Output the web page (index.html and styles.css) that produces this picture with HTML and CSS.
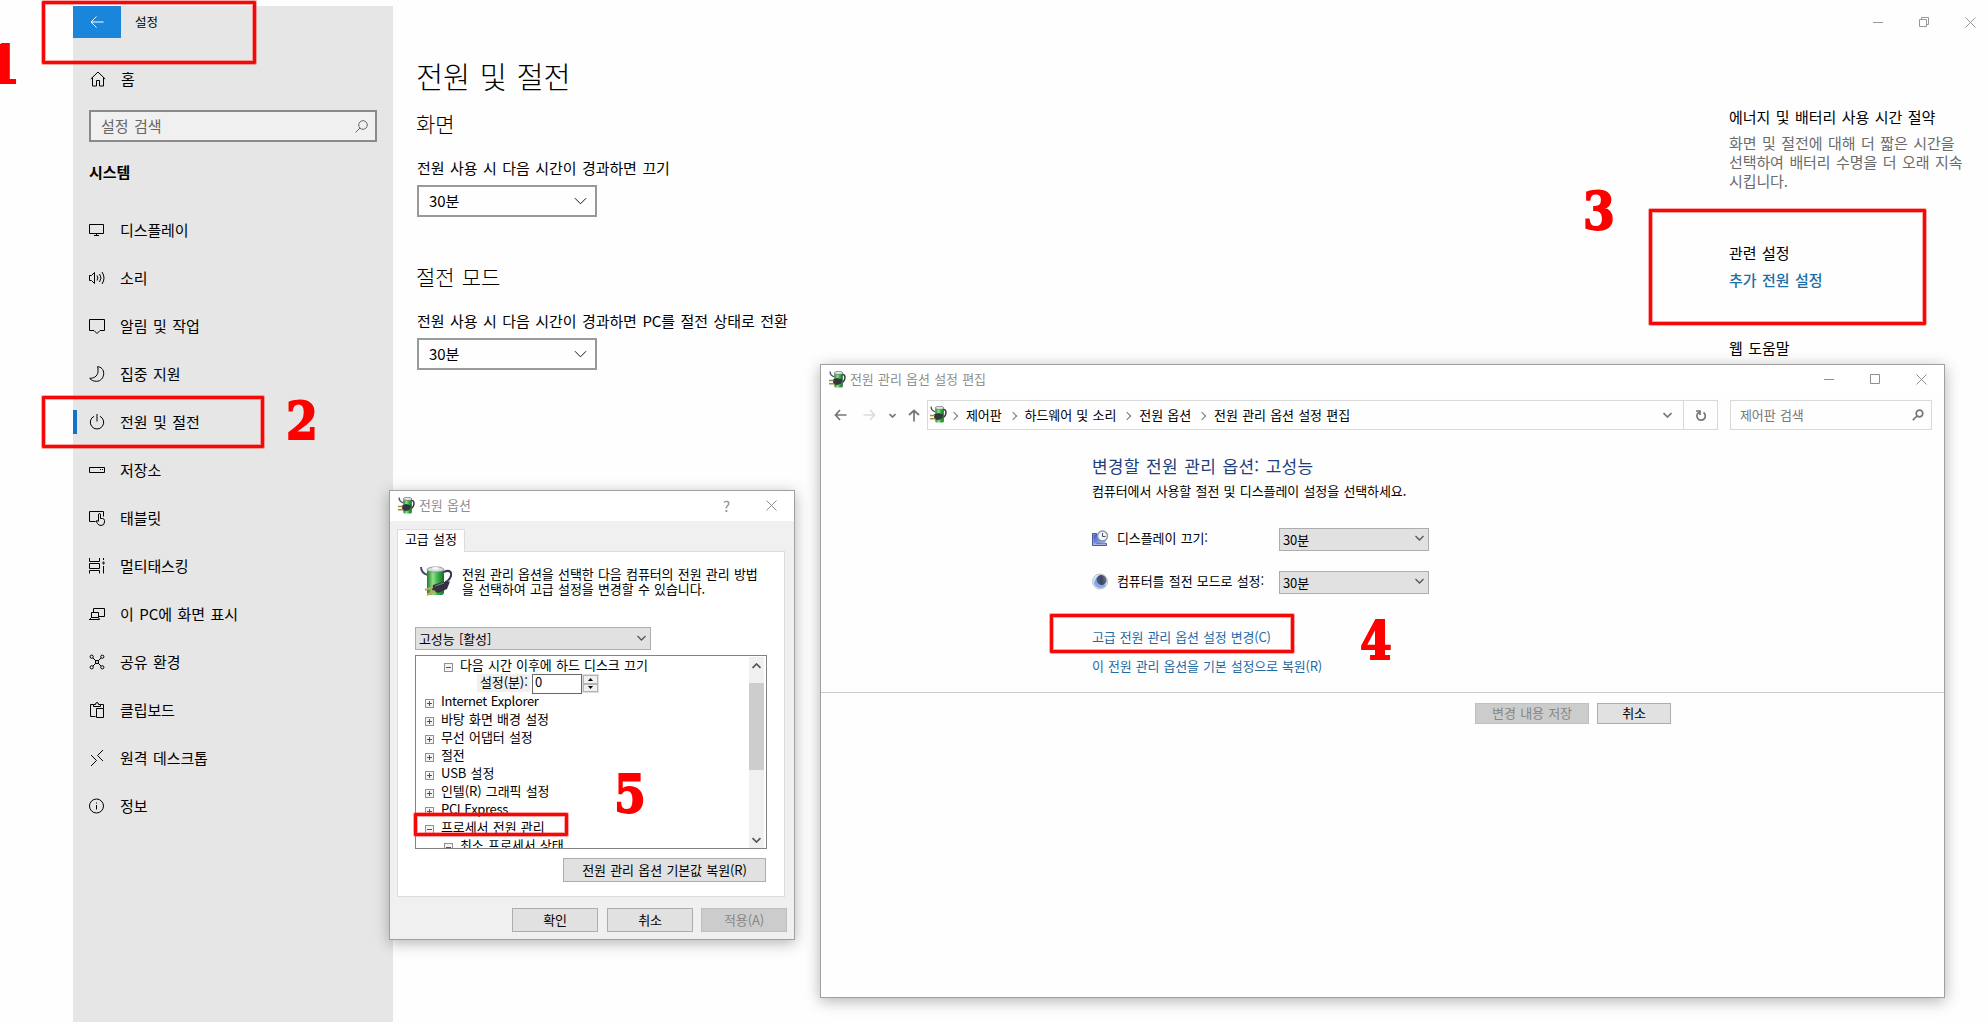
FILE: index.html
```html
<!DOCTYPE html>
<html lang="ko">

<head>
    <meta charset="UTF-8">
    <meta name="viewport" content="width=device-width, initial-scale=1.0">
    <title>전원 및 절전</title>
    <link rel="stylesheet" href="styles.css">
</head>

<body>
    <!-- shared icons -->
    <svg class="sprite" width="0" height="0">
        <defs>
            <linearGradient id="green" x1="0" x2="1" y1="0" y2="0">
                <stop offset="0" stop-color="#1d7a2c" />
                <stop offset=".35" stop-color="#8fe38c" />
                <stop offset=".6" stop-color="#3fb84a" />
                <stop offset="1" stop-color="#17692a" />
            </linearGradient>
            <linearGradient id="blue" x1="0" x2="1" y1="0" y2="1">
                <stop offset="0" stop-color="#3c55c4" />
                <stop offset="1" stop-color="#a9bbf2" />
            </linearGradient>
            <linearGradient id="moon" x1="1" x2="0" y1="0" y2="1">
                <stop offset="0" stop-color="#7c8594" />
                <stop offset=".5" stop-color="#3d4660" />
                <stop offset="1" stop-color="#4f6aa8" />
            </linearGradient>
        </defs>
        <symbol id="battery" viewBox="0 0 32 32">
            <path d="M24 6c6-3 9 1 6 6-2 3-3 4-5 4" fill="none" stroke="#3b3b50" stroke-width="2.2" />
            <path d="M1 1c0 4 3 7 7 8" fill="none" stroke="#4b4f66" stroke-width="2" />
            <rect x="7" y="3" width="17" height="26" rx="3" fill="url(#green)" />
            <ellipse cx="15.500" cy="3.500" rx="8.500" ry="2.600" fill="#d5dadd" stroke="#7d8a86" stroke-width=".8" />
            <ellipse cx="15.500" cy="2.400" rx="3.500" ry="1.300" fill="#f4f6f6" />
            <path d="M13 19l10-3 7-.5-3 7.500-9 4-6-3z" fill="#33343f" />
            <path d="M15 20l9-3" stroke="#777b8c" stroke-width="1.200" />
            <path d="M13 21l-8 3M15 25l-8 4" stroke="#c9a55a" stroke-width="2" />
        </symbol>
        <symbol id="battery-small" viewBox="0 0 16 16">
            <path d="M12 3.500c3-1 3.500 2 2.500 5-.5 1.500-1.500 2-2.500 2" fill="none" stroke="#343846" stroke-width="1.400" />
            <path d="M1 .5c0 2 1 4 4 5" fill="none" stroke="#4b4f66" stroke-width="1.200" />
            <rect x="5" y="1" width="8" height="14.500" rx="1.500" fill="url(#green)" />
            <ellipse cx="9" cy="1.800" rx="4" ry="1.500" fill="#dfe5e3" stroke="#56675c" stroke-width=".6" />
            <path d="M3.500 8l4-1.500 5 1.500-1.500 4-4 1.500-3-2z" fill="#34363b" />
            <path d="M4.500 9H0M5 12H0" stroke="#a88a3c" stroke-width="1.400" />
        </symbol>
        <symbol id="close" viewBox="0 0 11 11">
            <path d="M.5.5l10 10M10.500.5l-10 10" />
        </symbol>
        <symbol id="chevron" viewBox="0 0 14 8">
            <path d="M1 1l6 6 6-6" />
        </symbol>
        <symbol id="plus" viewBox="0 0 9 9">
            <rect x=".5" y=".5" width="8" height="8" fill="#f4f4f4" stroke="#919191" />
            <path d="M2 4.500h5M4.500 2v5" stroke="#39519b" />
        </symbol>
        <symbol id="minus" viewBox="0 0 9 9">
            <rect x=".5" y=".5" width="8" height="8" fill="#f4f4f4" stroke="#919191" />
            <path d="M2 4.500h5" stroke="#39519b" />
        </symbol>
    </svg>

    <div class="desktop">
        <!-- settings app -->
        <div class="settings">
            <aside class="sidebar">
                <div class="app-title">
                    <span class="back">
                        <svg class="line" width="14" height="12" viewBox="0 0 14 12"><path d="M6.500.5L1 6l5.500 5.500M1 6h12.500" /></svg>
                    </span>
                    <span class="label">설정</span>
                </div>
                <div class="nav-item home">
                    <svg class="line" viewBox="0 0 16 16"><path d="M.8 8L8 1l7.200 7M2.500 6.500v8.500h4V9.500h3V15h4V6.500" /></svg>
                    <span class="label">홈</span>
                </div>
                <div class="search">
                    <span class="label">설정 검색</span>
                    <svg class="line" width="13" height="13" viewBox="0 0 13 13"><circle cx="8" cy="5" r="4.300" /><path d="M5 8L.5 12.500" /></svg>
                </div>
                <h2 class="group">시스템</h2>
                <nav class="nav">
                    <div class="nav-item">
                        <svg class="line" viewBox="0 0 16 16"><path d="M.5 2.500h14v9H.5zM7.500 11.500v2M5 13.500h5" /></svg>
                        <span class="label">디스플레이</span>
                    </div>
                    <div class="nav-item">
                        <svg class="line" viewBox="0 0 16 16"><path d="M.5 5.500h2l3-3v11l-3-3h-2zM8 5.500q1.800 2.500 0 5M10.500 4q3 4 0 8M13 2q4 6 0 12" /></svg>
                        <span class="label">소리</span>
                    </div>
                    <div class="nav-item">
                        <svg class="line" viewBox="0 0 16 16"><path d="M.5 1.500h15v11h-4.500l-3 3-3-3H.5z" /></svg>
                        <span class="label">알림 및 작업</span>
                    </div>
                    <div class="nav-item">
                        <svg class="line" viewBox="0 0 16 16"><path d="M8.500.7c3.500 0 6.200 2.800 6.200 6.800 0 4.500-3.200 7.800-7.200 7.800-3 0-5.200-1-6.800-3C6 12.500 9.500 9 9 4 9 2.500 9 1.500 8.500.7z" /></svg>
                        <span class="label">집중 지원</span>
                    </div>
                    <div class="nav-item active">
                        <svg class="line" viewBox="0 0 16 16"><path d="M5 2.300a6.700 6.700 0 1 0 6 0M8 0v7.500" /></svg>
                        <span class="label">전원 및 절전</span>
                    </div>
                    <div class="nav-item">
                        <svg class="line" viewBox="0 0 16 16"><path d="M.5 5.500h15v5H.5zM11 7.500h1M13 7.500h1" /></svg>
                        <span class="label">저장소</span>
                    </div>
                    <div class="nav-item">
                        <svg class="line" viewBox="0 0 16 16"><path d="M6.500 11.500h-6v-10h14v5M9.500 11V5q0-1.500 1-1.500t1 1.500v3.500h2q2 .3 2 2v1.500q0 3.500-3.500 3.500-2.500 0-3.500-2l-1.500-2.500q.8-1 2.500.5" /></svg>
                        <span class="label">태블릿</span>
                    </div>
                    <div class="nav-item">
                        <svg class="line" viewBox="0 0 16 16"><path d="M.5 0v3.500h10V0M.5 15.500v-3h10v3M.5 5.500h10v5H.5zM14.500 0v2M14.500 8v7.500M13 5h3M14 4h1M14 6h1" /></svg>
                        <span class="label">멀티태스킹</span>
                    </div>
                    <div class="nav-item">
                        <svg class="line" viewBox="0 0 16 16"><path d="M4.500 6V2.500h11v8H10M2.500 6.500h7v5h-7zM0 13.500h10.500l-1-2M2.500 11.500L.5 13.500" /></svg>
                        <span class="label">이 PC에 화면 표시</span>
                    </div>
                    <div class="nav-item">
                        <svg class="line" viewBox="0 0 16 16"><circle cx="2.700" cy="2.700" r="1.600" /><circle cx="13.300" cy="2.700" r="1.600" /><circle cx="2.700" cy="13.300" r="1.600" /><circle cx="13.300" cy="13.300" r="1.600" /><circle cx="8" cy="8" r="1.600" /><path d="M4 4l3 3M12 4L9 7M4 12l3-3M12 12L9 9" /></svg>
                        <span class="label">공유 환경</span>
                    </div>
                    <div class="nav-item">
                        <svg class="line" viewBox="0 0 16 16"><path d="M6.500 14.500h-5v-12h3v2h7v-2h3v4M4.500 2.500h2q0-2 1.500-2t1.500 2h2M7.500 6.500h7v9h-7z" /></svg>
                        <span class="label">클립보드</span>
                    </div>
                    <div class="nav-item">
                        <svg class="line" viewBox="0 0 16 16"><path d="M2 5l5.500 5.500L2 16M14 0L8.500 5.500 14 11" /></svg>
                        <span class="label">원격 데스크톱</span>
                    </div>
                    <div class="nav-item">
                        <svg class="line" viewBox="0 0 16 16"><circle cx="7.500" cy="8" r="7" /><path d="M7.500 7v4.500M7.500 4.500v1" /></svg>
                        <span class="label">정보</span>
                    </div>
                </nav>
            </aside>

            <main class="content">
                <h1>전원 및 절전</h1>
                <section>
                    <h3>화면</h3>
                    <p>전원 사용 시 다음 시간이 경과하면 끄기</p>
                    <div class="select">30분<svg class="line" width="13" height="8"><use href="#chevron" /></svg></div>
                </section>
                <section>
                    <h3>절전 모드</h3>
                    <p>전원 사용 시 다음 시간이 경과하면 PC를 절전 상태로 전환</p>
                    <div class="select">30분<svg class="line" width="13" height="8"><use href="#chevron" /></svg></div>
                </section>
            </main>

            <aside class="related">
                <div class="window-buttons">
                    <svg class="line" width="11" height="11"><path d="M0 5.500h10" /></svg>
                    <svg class="line" width="11" height="11"><path d="M.5 2.500h7v7h-7zM2.500 2.500v-2h7v7h-2" /></svg>
                    <svg class="line" width="11" height="11"><use href="#close" /></svg>
                </div>
                <h4>에너지 및 배터리 사용 시간 절약</h4>
                <p class="hint">화면 및 절전에 대해 더 짧은 시간을<br>선택하여 배터리 수명을 더 오래 지속<br>시킵니다.</p>
                <h4 class="related-title">관련 설정</h4>
                <a class="link">추가 전원 설정</a>
                <h4 class="help-title">웹 도움말</h4>
            </aside>
        </div>

        <!-- control panel -->
        <div class="window panel-window">
            <div class="titlebar">
                <svg width="17" height="17"><use href="#battery-small" /></svg>
                <span class="title">전원 관리 옵션 설정 편집</span>
                <svg class="line" width="11" height="11"><path d="M0 5.500h10" /></svg>
                <svg class="line" width="11" height="11"><path d="M.5.500h9v9h-9z" /></svg>
                <svg class="line" width="11" height="11"><use href="#close" /></svg>
            </div>
            <div class="toolbar">
                <div class="arrows">
                    <svg class="bold" width="13" height="12" viewBox="0 0 13 12"><path d="M6 1L1.500 6 6 11M1.500 6H12.500" /></svg>
                    <svg class="bold off" width="13" height="12" viewBox="0 0 13 12"><path d="M7 1l4.500 5L7 11M11.500 6H.5" /></svg>
                    <svg class="bold" width="7" height="5" viewBox="0 0 7 5"><path d="M.5 1l3 3 3-3" /></svg>
                    <svg class="bold" width="12" height="13" viewBox="0 0 12 13"><path d="M1 6l5-4.500L11 6M6 1.500v11" /></svg>
                </div>
                <div class="address">
                    <svg width="17" height="17"><use href="#battery-small" /></svg>
                    <ol class="crumbs">
                        <li><span class="label">제어판</span></li>
                        <li><span class="label">하드웨어 및 소리</span></li>
                        <li><span class="label">전원 옵션</span></li>
                        <li><span class="label">전원 관리 옵션 설정 편집</span></li>
                    </ol>
                    <svg class="bold" width="9" height="6" viewBox="0 0 9 6"><path d="M.5 1l4 4 4-4" /></svg>
                    <span class="refresh">
                        <svg class="bold" width="12" height="13" viewBox="0 0 12 13"><path d="M8.500 3.500a4.200 4.200 0 1 1-4.500-.2M1 2h4v4" /></svg>
                    </span>
                </div>
                <div class="find">
                    <span class="label">제어판 검색</span>
                    <svg class="bold" width="12" height="12" viewBox="0 0 12 12"><circle cx="7.500" cy="4.500" r="3.300" /><path d="M5 7L.8 11.200" /></svg>
                </div>
            </div>
            <div class="panel-body">
                <h2>변경할 전원 관리 옵션: 고성능</h2>
                <p>컴퓨터에서 사용할 절전 및 디스플레이 설정을 선택하세요.</p>
                <div class="plan-row">
                    <svg width="17" height="17" viewBox="0 0 17 17">
                        <path d="M.5 3.500h4v10h10v2H.5z" fill="#a8b4e6" stroke="#4d5794" />
                        <rect x="1.500" y="4.500" width="12" height="9" fill="url(#blue)" />
                        <circle cx="10.500" cy="6" r="5" fill="#eef3f8" stroke="#8b95a3" stroke-width="1.400" />
                        <path d="M10.500 3v3.500h3" fill="none" stroke="#40506a" />
                    </svg>
                    <span>디스플레이 끄기:</span>
                    <div class="combo">30분<svg class="bold" width="9" height="6" viewBox="0 0 9 6"><path d="M.5 1l4 4 4-4" /></svg></div>
                </div>
                <div class="plan-row">
                    <svg width="17" height="17" viewBox="0 0 17 17">
                        <circle cx="8" cy="8.500" r="7.500" fill="#dbe4f1" stroke="#b9c1cc" />
                        <path d="M2 11q3 4.500 7 4t5-3.500q-8 .5-9-7-3 2.500-3 6.500z" fill="#86a8e6" />
                        <ellipse cx="9.500" cy="7" rx="5.200" ry="4.800" transform="rotate(40 9.500 7)" fill="url(#moon)" />
                    </svg>
                    <span>컴퓨터를 절전 모드로 설정:</span>
                    <div class="combo">30분<svg class="bold" width="9" height="6" viewBox="0 0 9 6"><path d="M.5 1l4 4 4-4" /></svg></div>
                </div>
                <a class="panel-link">고급 전원 관리 옵션 설정 변경(C)</a>
                <a class="panel-link">이 전원 관리 옵션을 기본 설정으로 복원(R)</a>
            </div>
            <div class="panel-footer">
                <div class="btn off">변경 내용 저장</div>
                <div class="btn">취소</div>
            </div>
        </div>

        <!-- advanced power options -->
        <div class="window dialog">
            <div class="titlebar">
                <svg width="17" height="17"><use href="#battery-small" /></svg>
                <span class="title">전원 옵션</span>
                <span class="question">?</span>
                <svg class="line" width="11" height="11"><use href="#close" /></svg>
            </div>
            <div class="tab">고급 설정</div>
            <div class="tab-page">
                <div class="intro">
                    <svg width="32" height="32"><use href="#battery" /></svg>
                    <p>전원 관리 옵션을 선택한 다음 컴퓨터의 전원 관리 방법<br>을 선택하여 고급 설정을 변경할 수 있습니다.</p>
                </div>
                <div class="combo plan">고성능 [활성]<svg class="bold" width="9" height="6" viewBox="0 0 9 6"><path d="M.5 1l4 4 4-4" /></svg></div>
                <div class="tree-box">
                    <ul class="tree">
                        <li class="sub"><svg width="9" height="9"><use href="#minus" /></svg>다음 시간 이후에 하드 디스크 끄기</li>
                        <li class="value">
                            <span class="value-label">설정(분):</span>
                            <span class="value-input">0</span>
                            <span class="spinner">
                                <i><svg width="5" height="3"><path d="M0 3l2.500-3L5 3z" /></svg></i>
                                <i><svg width="5" height="3"><path d="M0 0l2.500 3L5 0z" /></svg></i>
                            </span>
                        </li>
                        <li class="latin"><svg width="9" height="9"><use href="#plus" /></svg>Internet Explorer</li>
                        <li><svg width="9" height="9"><use href="#plus" /></svg>바탕 화면 배경 설정</li>
                        <li><svg width="9" height="9"><use href="#plus" /></svg>무선 어댑터 설정</li>
                        <li><svg width="9" height="9"><use href="#plus" /></svg>절전</li>
                        <li><svg width="9" height="9"><use href="#plus" /></svg>USB 설정</li>
                        <li><svg width="9" height="9"><use href="#plus" /></svg>인텔(R) 그래픽 설정</li>
                        <li class="latin"><svg width="9" height="9"><use href="#plus" /></svg>PCI Express</li>
                        <li><svg width="9" height="9"><use href="#minus" /></svg>프로세서 전원 관리</li>
                        <li class="sub"><svg width="9" height="9"><use href="#minus" /></svg>최소 프로세서 상태</li>
                    </ul>
                    <div class="scrollbar">
                        <svg class="bold" width="9" height="6" viewBox="0 0 9 6"><path d="M.5 5l4-4 4 4" /></svg>
                        <div class="thumb"></div>
                        <svg class="bold" width="9" height="6" viewBox="0 0 9 6"><path d="M.5 1l4 4 4-4" /></svg>
                    </div>
                </div>
                <div class="btn restore">전원 관리 옵션 기본값 복원(R)</div>
            </div>
            <div class="dialog-footer">
                <div class="btn">확인</div>
                <div class="btn">취소</div>
                <div class="btn off">적용(A)</div>
            </div>
        </div>

        <!-- step markers -->
        <div class="mark mark-1"></div>
        <div class="mark mark-2"></div>
        <div class="mark mark-3"></div>
        <div class="mark mark-4"></div>
        <div class="mark mark-5"></div>
        <span class="step step-1">1</span>
        <span class="step step-2">2</span>
        <span class="step step-3">3</span>
        <span class="step step-4">4</span>
        <span class="step step-5">5</span>
    </div>
</body>

</html>
```

FILE: styles.css
```css
* {
    box-sizing: border-box;
}

body {
    margin: 0;
    background-color: #fefefe;
    color: #000;
    font-family: "Noto Sans CJK KR", "Noto Sans", sans-serif;
    font-size: 15px;
    letter-spacing: -0.1px;
    overflow: hidden;
}

h1, h2, h3, h4, p, ol, ul {
    margin: 0;
    padding: 0;
    font-weight: 400;
    list-style: none;
}

svg {
    display: block;
    flex: none;
}

.sprite {
    position: absolute;
}

.line,
.bold {
    fill: none;
    stroke: currentColor;
    stroke-width: 1;
}

.bold {
    stroke-width: 1.7;
}

.label {
    padding-bottom: 2px;
}

.desktop {
    position: relative;
    width: 1988px;
    height: 1022px;
    overflow: hidden;
    white-space: nowrap;
}

/* -- Settings app -- */

.settings {
    display: flex;
    height: 100%;
    padding: 6px 0 0 73px;
    word-spacing: 1.5px;
}

.sidebar {
    flex: none;
    width: 320px;
    background-color: #e6e6e6;
}

.app-title {
    display: flex;
    align-items: center;
    gap: 14px;
    height: 32px;
    font-size: 12.5px;
}

.back {
    display: flex;
    align-items: center;
    justify-content: center;
    width: 48px;
    height: 32px;
    background-color: #1a86db;
    color: white;
}

.nav-item {
    display: flex;
    align-items: center;
    gap: 15px;
    height: 48px;
    padding-left: 16px;
}

.nav-item svg {
    width: 16px;
    height: 16px;
}

.home {
    height: 32px;
    margin: 25px 0 15px;
    padding-left: 17px;
}

.active {
    background: linear-gradient(#1373c8, #1373c8) 0 center / 4px 24px no-repeat;
}

.search {
    display: flex;
    align-items: center;
    justify-content: space-between;
    width: 288px;
    height: 32px;
    margin-left: 16px;
    padding: 0 7px 0 10px;
    border: 2px solid #8a8a8a;
    background-color: #f0f0f0;
    color: #666;
}

.group {
    margin: 18px 0 22px 16px;
    font-size: 15px;
    font-weight: 700;
    line-height: 24px;
}

.content {
    flex: 1;
    padding: 48px 0 0 24px;
}

.content h1 {
    margin: 0 0 13px -1px;
    font-size: 29.5px;
    font-weight: 300;
    line-height: 42px;
}

.content section {
    height: 153px;
}

.content h3 {
    margin-left: -1px;
    font-size: 21px;
    font-weight: 300;
    line-height: 28px;
}

.content section p {
    padding: 20px 0 6px;
    line-height: 22px;
}

.select {
    display: flex;
    align-items: center;
    justify-content: space-between;
    width: 180px;
    height: 32px;
    padding: 0 8px 1px 10px;
    border: 2px solid #999;
}

.related {
    flex: none;
    width: 259px;
}

.window-buttons {
    display: flex;
    justify-content: flex-end;
    gap: 35px;
    padding: 11px 12px 0 0;
    color: #999;
}

.related h4 {
    font-size: 15px;
    line-height: 22px;
}

.window-buttons + h4 {
    margin-top: 78px;
}

.hint {
    margin-top: 5px;
    color: #6b6b6b;
    line-height: 19px;
}

.related .related-title {
    margin-top: 52px;
}

.link {
    display: block;
    margin-top: 5px;
    color: #1a70a8;
    font-weight: 500;
    line-height: 22px;
}

.related .help-title {
    margin-top: 46px;
}

/* -- Classic windows -- */

.window {
    position: absolute;
    display: flex;
    flex-direction: column;
    border: 1px solid #a0a0a0;
    background-color: #fefefe;
    box-shadow: 0 3px 14px rgba(0, 0, 0, 0.3);
    font-size: 13px;
    word-spacing: 0.8px;
}

.titlebar {
    display: flex;
    flex: none;
    align-items: center;
    height: 30px;
    padding: 0 17px 2px 8px;
    background-color: white;
    color: #8f8f8f;
}

.title {
    flex: 1;
    margin-left: 4px;
    padding-bottom: 2px;
}

.btn {
    display: flex;
    align-items: center;
    justify-content: center;
    padding-bottom: 2px;
    border: 1px solid #adadad;
    background-color: #e1e1e1;
}

.btn.off {
    border-color: #bfbfbf;
    background-color: #ccc;
    color: #868686;
}

.combo {
    display: flex;
    align-items: center;
    justify-content: space-between;
    height: 23px;
    padding: 0 4px 1px 3px;
    border: 1px solid #adadad;
    background-color: #e1e1e1;
}

.combo svg {
    color: #555;
    stroke-width: 1.3;
}

/* -- Control panel -- */

.panel-window {
    left: 820px;
    top: 364px;
    width: 1125px;
    height: 634px;
}

.panel-window .titlebar {
    gap: 35px;
}

.panel-window .title {
    margin-left: -31px;
}

.toolbar {
    display: flex;
    align-items: center;
    height: 30px;
    margin: 5px 12px 0 13px;
    color: #767676;
}

.arrows {
    display: flex;
    align-items: center;
    width: 93px;
}

.arrows svg:nth-child(2) {
    margin: 0 13px 0 16px;
}

.arrows svg:nth-child(4) {
    margin-left: 12px;
}

.bold.off {
    color: #ddd;
}

.address {
    display: flex;
    align-items: center;
    width: 791px;
    height: 30px;
    padding-left: 2px;
    border: 1px solid #d9d9d9;
}

.address > svg:first-child {
    margin-bottom: 2px;
}

.crumbs {
    display: flex;
    flex: 1;
    color: #000;
}

.crumbs li {
    display: flex;
    align-items: center;
}

.crumbs li::before {
    content: "";
    width: 5px;
    height: 5px;
    margin: 1px 9px 0 4px;
    border: solid #777;
    border-width: 1.5px 1.5px 0 0;
    transform: rotate(45deg);
}

.crumbs li + li::before {
    margin-left: 8px;
}

.refresh {
    display: flex;
    align-items: center;
    justify-content: center;
    width: 34px;
    height: 28px;
    margin-left: 11px;
    border-left: 1px solid #d9d9d9;
}

.find {
    display: flex;
    align-items: center;
    justify-content: space-between;
    width: 202px;
    height: 30px;
    margin-left: 12px;
    padding: 0 7px 0 9px;
    border: 1px solid #d9d9d9;
}

.panel-body {
    height: 262px;
    padding: 24px 0 0 271px;
}

.panel-body h2 {
    color: #1d3f7d;
    font-size: 17px;
    letter-spacing: 0.2px;
    word-spacing: 1.6px;
    line-height: 24px;
}

.panel-body p {
    margin: 3px 0 27px;
    line-height: 20px;
}

.plan-row {
    display: flex;
    align-items: center;
    height: 23px;
    margin-bottom: 20px;
}

.plan-row span {
    width: 162px;
    margin-left: 8px;
    padding-bottom: 5px;
}

.plan-row svg:first-child {
    margin-bottom: 2px;
}

.plan-row .combo {
    width: 150px;
}

.panel-link {
    display: block;
    padding-top: 13px;
    color: #1f6ba5;
    letter-spacing: -0.2px;
    line-height: 20px;
}

.panel-link + .panel-link {
    padding-top: 9px;
}

.panel-footer {
    display: flex;
    gap: 8px;
    padding: 10px 0 0 654px;
    border-top: 1px solid #ccc;
}

.panel-footer .btn {
    width: 74px;
    height: 21px;
}

.panel-footer .btn.off {
    width: 114px;
}

/* -- Power options dialog -- */

.dialog {
    left: 389px;
    top: 490px;
    width: 406px;
    height: 450px;
    background-color: #f0f0f0;
}

.question {
    margin-right: 36px;
    font-size: 15px;
}

.tab {
    z-index: 1;
    width: 68px;
    height: 23px;
    margin: 8px 0 -1px 7px;
    padding-left: 7px;
    border: 1px solid #dcdcdc;
    border-bottom: 0;
    background-color: white;
    line-height: 18px;
}

.tab-page {
    width: 388px;
    height: 346px;
    margin-left: 7px;
    padding: 14px 0 0 17px;
    border: 1px solid #dcdcdc;
    background-color: white;
}

.intro {
    display: flex;
    gap: 10px;
    height: 61px;
    padding-left: 5px;
}

.intro p {
    line-height: 15px;
}

.plan {
    width: 236px;
}

.tree-box {
    display: flex;
    width: 352px;
    height: 194px;
    margin: 5px 0 9px;
    padding-right: 2px;
    border: 1px solid #828282;
    overflow: hidden;
}

.tree {
    flex: 1;
}

.tree li {
    display: flex;
    align-items: center;
    height: 18px;
    padding-left: 9px;
    line-height: 16px;
}

.tree li > svg {
    margin: 5px 7px 0 0;
}

.tree .latin {
    letter-spacing: -0.35px;
}

.tree .sub {
    padding-left: 28px;
}

.tree .sub > svg {
    margin-right: 7px;
}

.tree .value {
    align-items: flex-start;
    padding-left: 61px;
}

.value-label {
    width: 53px;
    height: 18px;
    padding-left: 3px;
    background-color: #f0f0f0;
}

.value-input {
    width: 50px;
    height: 20px;
    margin-left: 2px;
    padding-left: 2px;
    border: 1px solid #666;
    background-color: white;
    line-height: 14px;
}

.spinner {
    display: grid;
    width: 17px;
    height: 19px;
    padding: 1px;
    background-color: #ddd;
}

.spinner i {
    display: flex;
    align-items: center;
    justify-content: center;
    border: 1px solid #b5b5b5;
    background-color: #f0f0f0;
}

.scrollbar {
    display: flex;
    flex-direction: column;
    align-items: center;
    width: 15px;
    height: 191px;
    margin-top: 1px;
    padding: 6px 0 5px;
    background-color: #f0f0f0;
    color: #555;
}

.thumb {
    width: 15px;
    height: 87px;
    margin: 14px 0 auto;
    background-color: #cdcdcd;
}

.restore {
    width: 203px;
    height: 24px;
    margin-left: 148px;
}

.dialog-footer {
    display: flex;
    justify-content: flex-end;
    gap: 8px;
    padding: 11px 7px 0 0;
}

.dialog-footer .btn {
    width: 86px;
    height: 24px;
}

.dialog-footer .btn:first-child {
    margin-right: 1px;
}

/* -- Step markers -- */

.mark {
    position: absolute;
    border: 3px solid #f50808;
    border-radius: 1px;
    box-shadow: 0 0 0 1px rgba(255, 60, 60, 0.45), inset 0 0 0 1px rgba(255, 60, 60, 0.45);
}

.mark-1 {
    left: 42px;
    top: 1px;
    width: 214px;
    height: 63px;
}

.mark-2 {
    left: 42px;
    top: 396px;
    width: 222px;
    height: 52px;
}

.mark-3 {
    left: 1649px;
    top: 209px;
    width: 277px;
    height: 116px;
}

.mark-4 {
    left: 1050px;
    top: 614px;
    width: 244px;
    height: 39px;
}

.mark-5 {
    left: 414px;
    top: 813px;
    width: 154px;
    height: 23px;
}

.step {
    position: absolute;
    width: 38px;
    color: red;
    font: 700 52px/40px "DejaVu Serif", serif;
    text-align: center;
    transform: scaleX(0.88);
    -webkit-text-stroke: 1.8px red;
}

.step-1 {
    left: -15px;
    top: 45px;
}

.step-2 {
    left: 283px;
    top: 401px;
}

.step-3 {
    left: 1580px;
    top: 191px;
}

.step-4 {
    left: 1357px;
    top: 621px;
}

.step-5 {
    left: 611px;
    top: 774px;
}
```
